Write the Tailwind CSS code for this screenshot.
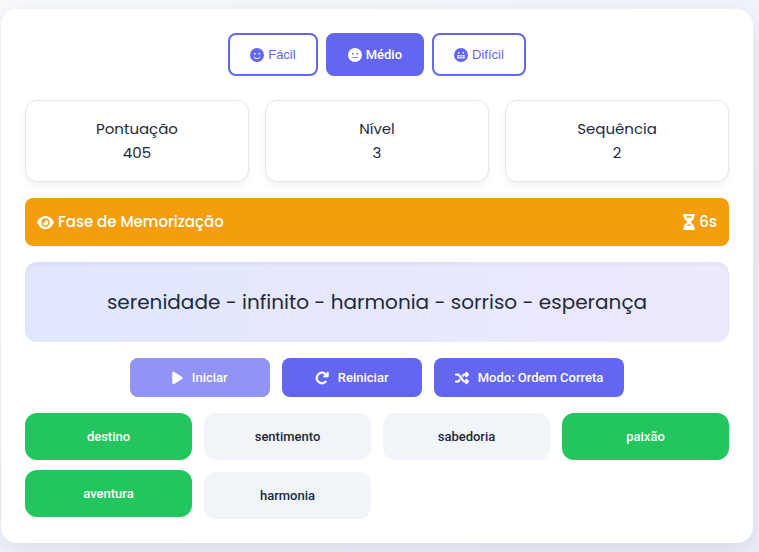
<!DOCTYPE html>
<html lang="pt-BR">
<head>
    <meta charset="UTF-8">
    <meta name="viewport" content="width=device-width, initial-scale=1.0">
    <title>Jogo da Memória</title>
    <script src="https://cdn.jsdelivr.net/npm/@tailwindcss/browser@4"></script>
</head>
<body class="min-h-screen bg-linear-135 from-[#f8fafc] to-[#eef0fd] font-['Poppins','Inter',sans-serif] text-[15px] text-slate-800">
    <main class="ml-px mr-1.5 mt-[9px] rounded-2xl bg-white p-6 shadow-[0_10px_30px_rgba(30,41,59,0.12)]">

        <!-- Difficulty -->
        <div class="mb-6 flex flex-wrap justify-center gap-2 font-['Liberation_Sans',Arial,sans-serif] text-[13px]">
            <button class="flex h-[43px] items-center gap-1 rounded-lg border-2 border-[#6366f1] bg-white px-5 text-[#6366f1]">
                <svg class="size-[14px]" viewBox="0 0 512 512" fill="currentColor" aria-hidden="true"><path d="M256 512A256 256 0 1 0 256 0a256 256 0 1 0 0 512zM164.1 325.5C182 346.2 212.6 368 256 368s74-21.8 91.9-42.5c5.8-6.7 15.9-7.4 22.6-1.6s7.4 15.9 1.6 22.6C349.8 372.1 311.1 400 256 400s-93.8-27.9-116.1-53.5c-5.8-6.7-5.1-16.8 1.6-22.6s16.8-5.1 22.6 1.6zM144.4 208a32 32 0 1 1 64 0 32 32 0 1 1 -64 0zm192-32a32 32 0 1 1 0 64 32 32 0 1 1 0-64z"/></svg>
                Fácil
            </button>
            <button class="flex h-[43px] items-center gap-1 rounded-lg border-2 border-[#6366f1] bg-[#6366f1] px-5 font-['Roboto',Arial,sans-serif] font-medium text-white">
                <svg class="size-[14px]" viewBox="0 0 512 512" fill="currentColor" fill-rule="evenodd" aria-hidden="true"><path d="M256 512A256 256 0 1 0 256 0a256 256 0 1 0 0 512zM176.4 176a32 32 0 1 1 0 64 32 32 0 1 1 0-64zm128 32a32 32 0 1 1 64 0 32 32 0 1 1 -64 0zM160 336H352c8.8 0 16 7.2 16 16s-7.2 16-16 16H160c-8.8 0-16-7.2-16-16s7.2-16 16-16z"/></svg>
                Médio
            </button>
            <button class="flex h-[43px] items-center gap-1 rounded-lg border-2 border-[#6366f1] bg-white px-5 text-[#6366f1]">
                <svg class="size-[14px]" viewBox="0 0 512 512" fill="currentColor" fill-rule="evenodd" aria-hidden="true"><path d="M256 512A256 256 0 1 0 256 0a256 256 0 1 0 0 512zM176.4 144a32 32 0 1 1 0 64 32 32 0 1 1 0-64zm128 32a32 32 0 1 1 64 0 32 32 0 1 1 -64 0zM160 256h24v56h-72v-8c0-26 22-48 48-48zM200 256h48v56h-48zM264 256h48v56h-48zM328 256h24c26 0 48 22 48 48v8h-72zM112 328h72v56h-24c-26 0-48-22-48-48zM200 328h48v56h-48zM264 328h48v56h-48zM328 328h72v8c0 26-22 48-48 48h-24z"/></svg>
                Difícil
            </button>
        </div>

        <!-- Stats -->
        <div class="mb-4 grid grid-cols-3 gap-4 text-center leading-6">
            <div class="rounded-xl border border-slate-200 bg-white p-4 shadow-[0_4px_6px_rgba(0,0,0,0.05)]">
                <p>Pontuação</p>
                <p>405</p>
            </div>
            <div class="rounded-xl border border-slate-200 bg-white p-4 shadow-[0_4px_6px_rgba(0,0,0,0.05)]">
                <p>Nível</p>
                <p>3</p>
            </div>
            <div class="rounded-xl border border-slate-200 bg-white p-4 shadow-[0_4px_6px_rgba(0,0,0,0.05)]">
                <p>Sequência</p>
                <p>2</p>
            </div>
        </div>

        <!-- Phase bar -->
        <div class="mb-4 flex items-center justify-between rounded-lg bg-[#f59e0b] p-3 font-medium leading-6 text-white">
            <span class="flex items-center gap-1">
                <svg class="h-[15px] w-[17px]" viewBox="0 0 576 512" fill="currentColor" aria-hidden="true"><path d="M288 32c-80.8 0-145.5 36.8-192.6 80.6C48.6 156 17.3 208 2.5 243.7c-3.3 7.9-3.3 16.7 0 24.6C17.3 304 48.6 356 95.4 399.4C142.5 443.2 207.2 480 288 480s145.5-36.8 192.6-80.6c46.8-43.5 78.1-95.4 93-131.1c3.3-7.9 3.3-16.7 0-24.6c-14.9-35.7-46.2-87.7-93-131.1C433.5 68.8 368.8 32 288 32zM144 256a144 144 0 1 1 288 0 144 144 0 1 1 -288 0zm144-64c0 35.3-28.7 64-64 64c-7.1 0-13.9-1.2-20.3-3.3c-5.5-1.8-11.9 1.6-11.7 7.4c.3 6.9 1.3 13.8 3.2 20.7c13.7 51.2 66.4 81.6 117.6 67.9s81.6-66.4 67.9-117.6c-11.1-41.5-47.8-69.4-88.6-71.1c-5.8-.2-9.2 6.1-7.4 11.7c2.1 6.4 3.3 13.2 3.3 20.3z"/></svg>
                Fase de Memorização
            </span>
            <span class="flex items-center gap-1">
                <svg class="h-4 w-3" viewBox="0 0 384 512" fill="currentColor" stroke="currentColor" stroke-width="16" aria-hidden="true"><path d="M32 0C14.3 0 0 14.3 0 32S14.3 64 32 64V75c0 42.4 16.9 83.1 46.9 113.1L146.7 256 78.9 323.9C48.9 353.9 32 394.6 32 437v11c-17.7 0-32 14.3-32 32s14.3 32 32 32H64 320h32c17.7 0 32-14.3 32-32s-14.3-32-32-32V437c0-42.4-16.9-83.1-46.9-113.1L237.3 256l67.9-67.9c30-30 46.9-70.7 46.9-113.1V64c17.7 0 32-14.3 32-32s-14.3-32-32-32H320 64 32zM96 75V64H288V75c0 19-5.6 37.4-16 53H112c-10.3-15.6-16-34-16-53zm16 309c3.5-5.3 7.6-10.3 12.1-14.9L192 301.3l67.9 67.9c4.6 4.6 8.6 9.6 12.1 14.9H112z"/></svg>
                6s
            </span>
        </div>

        <!-- Words to memorize -->
        <div class="mb-4 flex min-h-20 items-center justify-center rounded-xl bg-linear-to-r from-[#e0e7ff] to-[#ede9fe] px-4 text-center text-[20px] shadow-[inset_0_2px_4px_rgba(0,0,0,0.05)]">
            serenidade - infinito - harmonia - sorriso - esperança
        </div>

        <!-- Controls -->
        <div class="mb-4 flex flex-wrap justify-center gap-3 font-['Roboto',Arial,sans-serif] text-[13px] font-medium text-white">
            <button disabled class="flex h-[39px] min-w-[140px] items-center justify-center gap-[9px] rounded-lg bg-[#6366f1] px-[21px] opacity-70">
                <svg class="h-[14px] w-[11px]" viewBox="0 0 384 512" fill="currentColor" aria-hidden="true"><path d="M73 39c-14.8-9.1-33.4-9.4-48.5-.9S0 62.6 0 80V432c0 17.4 9.4 33.4 24.5 41.9s33.7 8.1 48.5-.9L361 297c14.3-8.7 23-24.2 23-41s-8.7-32.2-23-41L73 39z"/></svg>
                Iniciar
            </button>
            <button class="flex h-[39px] min-w-[140px] items-center justify-center gap-[9px] rounded-lg bg-[#6366f1] px-[21px]">
                <svg class="size-[14px]" viewBox="0 0 512 512" fill="currentColor" stroke="currentColor" stroke-width="16" aria-hidden="true"><path d="M386.3 160H336c-17.7 0-32 14.3-32 32s14.3 32 32 32H464c17.7 0 32-14.3 32-32V64c0-17.7-14.3-32-32-32s-32 14.3-32 32v51.2L414.4 97.6c-87.5-87.5-229.3-87.5-316.8 0s-87.5 229.3 0 316.8s229.3 87.5 316.8 0c12.5-12.5 12.5-32.8 0-45.3s-32.8-12.5-45.3 0c-62.5 62.5-163.8 62.5-226.3 0s-62.5-163.8 0-226.3s163.8-62.5 226.3 0L386.3 160z"/></svg>
                Reiniciar
            </button>
            <button class="flex h-[39px] min-w-[140px] items-center justify-center gap-[9px] rounded-lg bg-[#6366f1] px-[21px]">
                <svg class="size-[14px]" viewBox="0 0 512 512" fill="currentColor" stroke="currentColor" stroke-width="16" aria-hidden="true"><path d="M403.8 34.4c12-5 25.7-2.2 34.9 6.9l64 64c6 6 9.4 14.1 9.4 22.6s-3.4 16.6-9.4 22.6l-64 64c-9.2 9.2-22.9 11.9-34.9 6.9s-19.8-16.6-19.8-29.6V160H352c-10.1 0-19.6 4.7-25.6 12.8L284 229.3 244 176l31.2-41.6C293.3 110.2 321.8 96 352 96h32V64c0-12.9 7.8-24.6 19.8-29.6zM164 282.7L204 336l-31.2 41.6C154.7 401.8 126.2 416 96 416H32c-17.7 0-32-14.3-32-32s14.3-32 32-32H96c10.1 0 19.6-4.7 25.6-12.8L164 282.7zm274.6 188c-9.2 9.2-22.9 11.9-34.9 6.9s-19.8-16.6-19.8-29.6V416H352c-30.2 0-58.7-14.2-76.8-38.4L121.6 172.8c-6-8.1-15.5-12.8-25.6-12.8H32c-17.7 0-32-14.3-32-32s14.3-32 32-32H96c30.2 0 58.7 14.2 76.8 38.4L326.4 339.2c6 8.1 15.5 12.8 25.6 12.8h32V320c0-12.9 7.8-24.6 19.8-29.6s25.7-2.2 34.9 6.9l64 64c6 6 9.4 14.1 9.4 22.6s-3.4 16.6-9.4 22.6l-64 64z"/></svg>
                Modo: Ordem Correta
            </button>
        </div>

        <!-- Word options -->
        <div class="grid grid-cols-4 gap-3 font-['Roboto',Arial,sans-serif] text-[13px] font-medium">
            <button class="h-[47px] rounded-xl bg-[#22c55e] text-white">destino</button>
            <button class="h-[47px] rounded-xl bg-slate-100">sentimento</button>
            <button class="h-[47px] rounded-xl bg-slate-100">sabedoria</button>
            <button class="h-[47px] rounded-xl bg-[#22c55e] text-white">paixão</button>
            <button class="h-[47px] -translate-y-0.5 rounded-xl bg-[#22c55e] text-white">aventura</button>
            <button class="h-[47px] rounded-xl bg-slate-100">harmonia</button>
        </div>
    </main>
</body>
</html>
